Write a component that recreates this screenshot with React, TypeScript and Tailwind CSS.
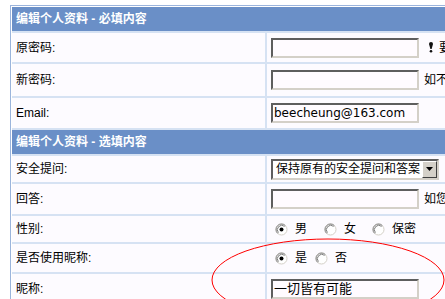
import type { ReactNode } from 'react'

const FONT = "font-['Liberation_Sans','Noto_Sans_CJK_SC',sans-serif]"

function TextBox({ value = '', latin = false }: { value?: string; latin?: boolean }) {
  return (
    <div
      className={`flex h-[20px] w-[148px] shrink-0 items-center border-2 border-t-[#5e5e5e] border-l-[#5e5e5e] border-r-[#d4d0c8] border-b-[#d4d0c8] bg-[#fffbff] pl-[1px] leading-[16px] text-black ${
        latin ? "font-['DejaVu_Sans',sans-serif] text-[12px]" : 'text-[13px]'
      }`}
    >
      {value}
    </div>
  )
}

function Hint({ children }: { children: ReactNode }) {
  return <span className="ml-[5px] whitespace-nowrap text-[12px] text-black">{children}</span>
}

function Radio({ checked = false }: { checked?: boolean }) {
  return (
    <svg width="13" height="13" viewBox="0 0 13 13" className="shrink-0">
      <circle cx="6.5" cy="6.5" r="5.5" fill="#ffffff" stroke="#d4d0c8" />
      <path d="M2.6 10.4 A5.5 5.5 0 0 1 10.4 2.6" fill="none" stroke="#8a8a8a" />
      <path d="M3.4 9.6 A4.4 4.4 0 0 1 9.6 3.4" fill="none" stroke="#5a5a5a" strokeWidth="0.8" />
      {checked && <circle cx="6.5" cy="6.5" r="2" fill="#000000" />}
    </svg>
  )
}

function Select({ value }: { value: string }) {
  return (
    <div className="flex h-[21px] w-[168px] shrink-0 items-center border-2 border-t-[#5e5e5e] border-l-[#5e5e5e] border-r-[#d4d0c8] border-b-[#d4d0c8] bg-white">
      <span className="flex-1 pl-[3px] text-[12px] leading-[16px] whitespace-nowrap text-black">{value}</span>
      <span className="flex h-[17px] w-[15px] items-center justify-center border border-t-[#ffffff] border-l-[#ffffff] border-r-[#404040] border-b-[#404040] bg-[#d4d0c8]">
        <svg width="7" height="4" viewBox="0 0 7 4">
          <path d="M0 0 H7 L3.5 4 Z" fill="#000" />
        </svg>
      </span>
    </div>
  )
}

function Header({ title }: { title: string }) {
  return (
    <div className="col-span-2 flex h-[24px] items-center bg-[#6a8fc7] pl-[4px] text-[12px] font-bold text-white">
      {title}
    </div>
  )
}

function Row({ label, h, children }: { label: string; h: string; children: ReactNode }) {
  return (
    <>
      <div className={`flex items-center bg-[#fdfbff] pl-[4px] text-[12px] text-black ${h}`}>{label}</div>
      <div className={`flex items-center bg-[#fdfbff] pl-[4px] ${h}`}>{children}</div>
    </>
  )
}

export default function App() {
  return (
    <div className={`relative h-[299px] w-[445px] overflow-hidden bg-white pl-[10px] pt-[5px] ${FONT}`}>
      <div className="w-[620px] border border-[#9bb4dc] bg-white p-px">
        <div className="grid grid-cols-[253px_1fr] gap-[2px] bg-[#d6e2f3]">
          <Header title="编辑个人资料 - 必填内容" />
          <Row label="原密码:" h="h-[29px]">
            <TextBox />
            <svg width="6" height="11" viewBox="0 0 6 11" className="ml-[9px] shrink-0">
              <path d="M1 2 A2 2 0 0 1 5 2 L3.6 7 H2.4 Z" fill="#111" />
              <circle cx="3" cy="9.3" r="1.3" fill="#111" />
            </svg>
            <Hint>要修改密码或Email，请输入原密码</Hint>
          </Row>
          <Row label="新密码:" h="h-[32px]">
            <TextBox />
            <Hint>如不修改密码，请留空</Hint>
          </Row>
          <Row label="Email:" h="h-[30px]">
            <TextBox value="beecheung@163.com" latin />
          </Row>
          <Header title="编辑个人资料 - 选填内容" />
          <Row label="安全提问:" h="h-[26px]">
            <Select value="保持原有的安全提问和答案" />
          </Row>
          <Row label="回答:" h="h-[30px]">
            <TextBox />
            <Hint>如您不想修改安全提问，请留空</Hint>
          </Row>
          <Row label="性别:" h="h-[26px]">
            <div className="flex items-center pl-[4px] text-[12px] text-black">
              <Radio checked />
              <span className="ml-[7px]">男</span>
              <span className="ml-[17px] flex"><Radio /></span>
              <span className="ml-[7px]">女</span>
              <span className="ml-[16px] flex"><Radio /></span>
              <span className="ml-[7px]">保密</span>
            </div>
          </Row>
          <Row label="是否使用昵称:" h="h-[28px]">
            <div className="flex items-center pl-[4px] text-[12px] text-black">
              <Radio checked />
              <span className="ml-[7px]">是</span>
              <span className="ml-[8px] flex"><Radio /></span>
              <span className="ml-[7px]">否</span>
            </div>
          </Row>
          <Row label="昵称:" h="h-[30px]">
            <TextBox value="一切皆有可能" />
          </Row>
        </div>
      </div>
      <svg
        className="pointer-events-none absolute left-0 top-0"
        width="445"
        height="299"
        viewBox="0 0 445 299"
      >
        <ellipse cx="328" cy="280" rx="116" ry="41" fill="none" stroke="#ff0000" strokeWidth="1" />
      </svg>
    </div>
  )
}
